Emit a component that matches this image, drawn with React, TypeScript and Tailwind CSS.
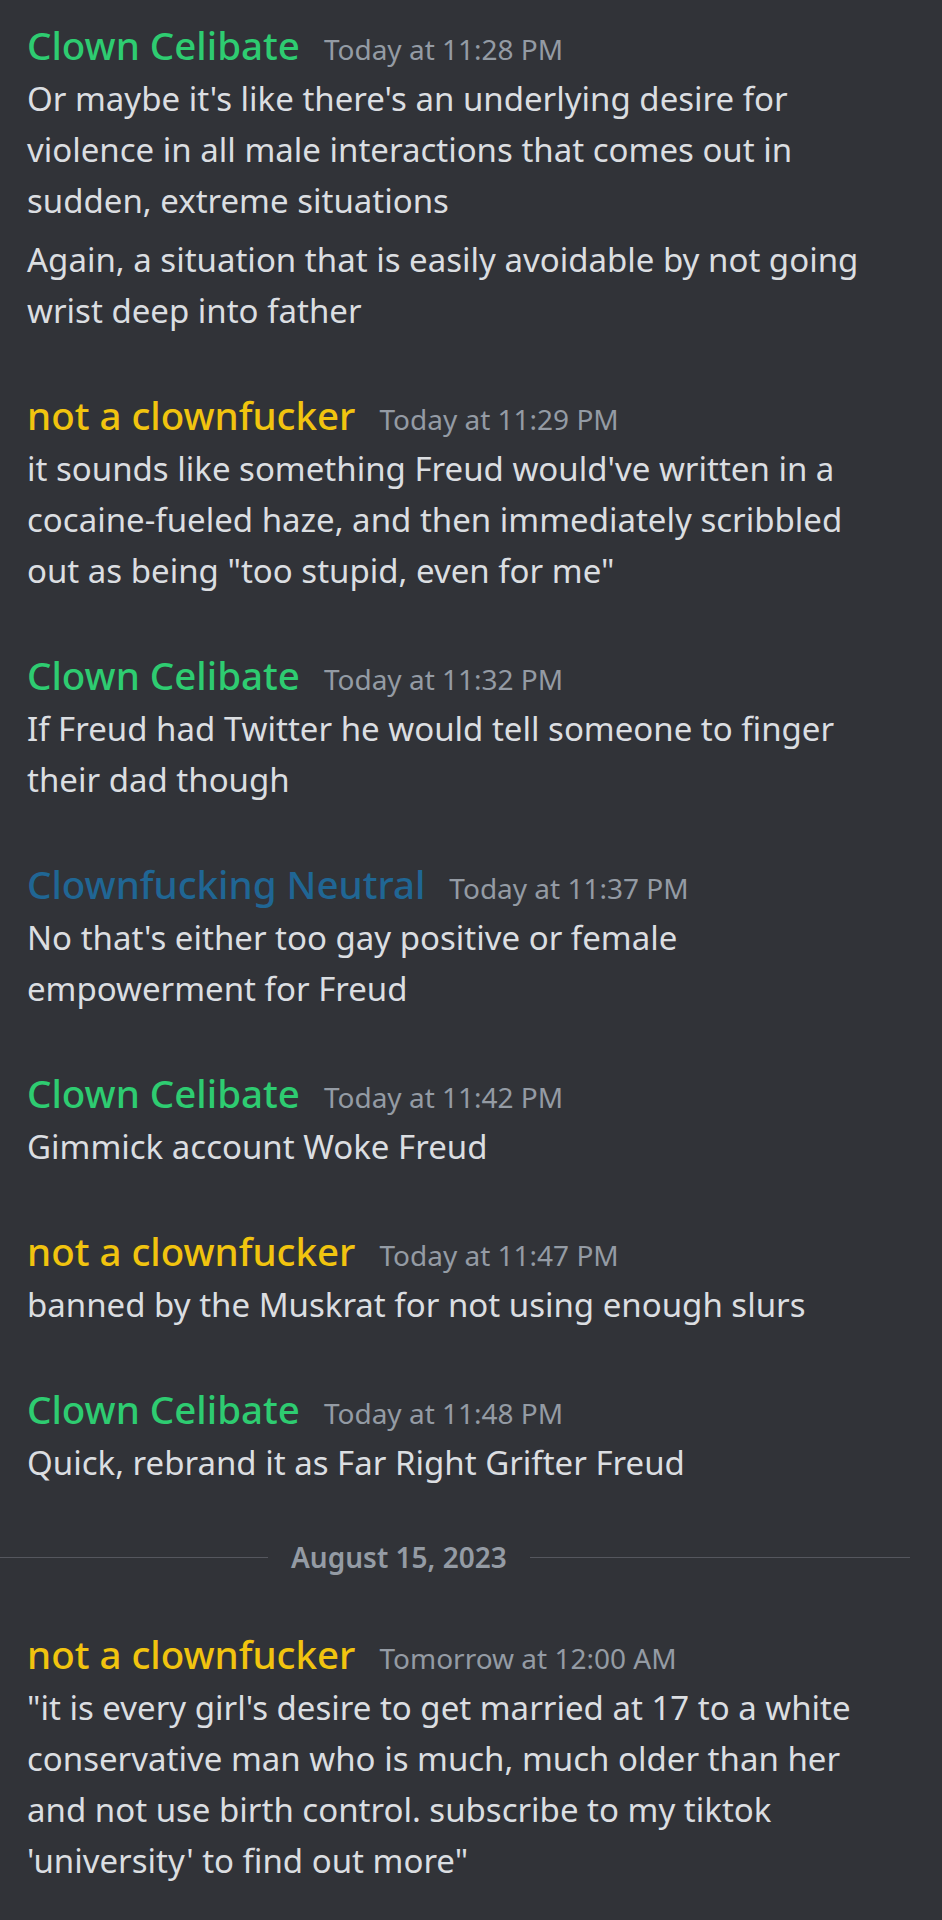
type Message = {
  author: string;
  color: string;
  time: string;
  lines: string[];
};

const before: Message[] = [
  {
    author: "Clown Celibate",
    color: "text-[#2ecc71]",
    time: "Today at 11:28 PM",
    lines: [
      "Or maybe it's like there's an underlying desire for violence in all male interactions that comes out in sudden, extreme situations",
      "Again, a situation that is easily avoidable by not going wrist deep into father",
    ],
  },
  {
    author: "not a clownfucker",
    color: "text-[#f1c40f]",
    time: "Today at 11:29 PM",
    lines: [
      'it sounds like something Freud would\'ve written in a cocaine-fueled haze, and then immediately scribbled out as being "too stupid, even for me"',
    ],
  },
  {
    author: "Clown Celibate",
    color: "text-[#2ecc71]",
    time: "Today at 11:32 PM",
    lines: ["If Freud had Twitter he would tell someone to finger their dad though"],
  },
  {
    author: "Clownfucking Neutral",
    color: "text-[#206694]",
    time: "Today at 11:37 PM",
    lines: ["No that's either too gay positive or female empowerment for Freud"],
  },
  {
    author: "Clown Celibate",
    color: "text-[#2ecc71]",
    time: "Today at 11:42 PM",
    lines: ["Gimmick account Woke Freud"],
  },
  {
    author: "not a clownfucker",
    color: "text-[#f1c40f]",
    time: "Today at 11:47 PM",
    lines: ["banned by the Muskrat for not using enough slurs"],
  },
  {
    author: "Clown Celibate",
    color: "text-[#2ecc71]",
    time: "Today at 11:48 PM",
    lines: ["Quick, rebrand it as Far Right Grifter Freud"],
  },
];

const after: Message[] = [
  {
    author: "not a clownfucker",
    color: "text-[#f1c40f]",
    time: "Tomorrow at 12:00 AM",
    lines: [
      "\"it is every girl's desire to get married at 17 to a white conservative man who is much, much older than her and not use birth control. subscribe to my tiktok 'university' to find out more\"",
    ],
  },
];

const MessageGroup = ({ msg }: { msg: Message }) => (
  <div className="pl-[27px] pr-[64px]">
    <div className="flex h-[56px] items-baseline gap-[24px]">
      <span className={`text-[38.5px] font-medium leading-[56px] ${msg.color}`}>{msg.author}</span>
      <span className="text-[28px] leading-[40px] text-[#949ba4]">{msg.time}</span>
    </div>
    <div className="flex flex-col gap-2">
      {msg.lines.map((line, i) => (
        <p key={i} className="text-[33px] leading-[51px] text-[#dbdee1]">
          {line}
        </p>
      ))}
    </div>
  </div>
);

export default function App() {
  return (
    <div className="min-h-screen w-full bg-[#313338] pt-[17px] pb-10 font-['Noto_Sans',sans-serif]">
      <div className="flex flex-col gap-[51px]">
        {before.map((msg, i) => (
          <MessageGroup key={i} msg={msg} />
        ))}
      </div>

      <div className="mt-[49px] mb-[49px] flex items-center pr-[32px] leading-[40px]">
        <div className="h-px w-[268px] bg-[#55575e]" />
        <span className="px-[23px] text-[28px] font-semibold text-[#949ba4]">August 15, 2023</span>
        <div className="h-px flex-1 bg-[#55575e]" />
      </div>

      <div className="flex flex-col gap-[51px]">
        {after.map((msg, i) => (
          <MessageGroup key={i} msg={msg} />
        ))}
      </div>
    </div>
  );
}
